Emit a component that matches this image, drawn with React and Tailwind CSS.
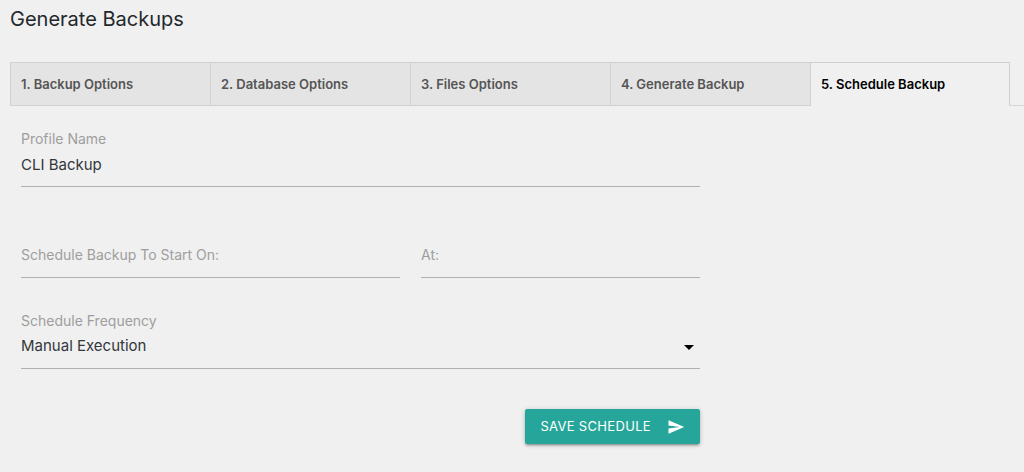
import { useState } from 'react';

const tabs = [
    { id: 'options', label: '1. Backup Options' },
    { id: 'database', label: '2. Database Options' },
    { id: 'files', label: '3. Files Options' },
    { id: 'generate', label: '4. Generate Backup' },
    { id: 'schedule', label: '5. Schedule Backup' },
];

const fieldClass = 'block w-full border-b border-[#b0b0b0] bg-transparent text-[15px] text-[#32373c] outline-none focus:border-[#26a69a]';
const labelClass = 'block text-[14px] leading-5 text-[#9e9e9e]';

// Label sits inside the empty field and hides once there is a value
const InlineField = ({ id, label, className }) => {
    const [value, setValue] = useState('');

    return (
        <div className={`relative ${className}`}>
            <input
                id={id}
                type="text"
                value={value}
                onChange={(e) => setValue(e.target.value)}
                className={`${fieldClass} h-12`}
            />
            <label
                htmlFor={id}
                className={`${labelClass} pointer-events-none absolute left-0 top-[15px] ${value ? 'opacity-0' : ''}`}
            >
                {label}
            </label>
        </div>
    );
};

const App = () => {
    const [active, setActive] = useState('schedule');

    return (
        <main className="min-h-screen bg-[#f0f0f0] pl-2.5 pt-1 font-['Inter',sans-serif]">
            <h1 className="text-[20px] leading-[30px] text-[#23282d]">Generate Backups</h1>

            {/* Tabs */}
            <nav className="mt-7 flex border-b border-[#d6d6d6]">
                {tabs.map((tab) => (
                    <a
                        key={tab.id}
                        href={`#${tab.id}`}
                        onClick={() => setActive(tab.id)}
                        className={`-mb-px min-w-0 max-w-[200px] flex-1 border-l border-t border-[#d0d0d0] px-2.5 py-3 text-[13px] font-semibold leading-[18px] last:border-r ${
                            active === tab.id
                                ? 'bg-[#f0f0f0] pb-[13px] text-black'
                                : 'border-b bg-[#e4e4e4] text-[#555555]'
                        }`}
                    >
                        {tab.label}
                    </a>
                ))}
            </nav>

            {/* Schedule form */}
            <form className="ml-[11px] mt-[23px] max-w-[679px]" onSubmit={(e) => e.preventDefault()}>
                <div>
                    <label htmlFor="profile" className={labelClass}>Profile Name</label>
                    <input id="profile" type="text" defaultValue="CLI Backup" className={`${fieldClass} h-[38px] pb-1.5`} />
                </div>

                <div className="mt-[43px] flex gap-[21px]">
                    <InlineField id="start" label="Schedule Backup To Start On:" className="w-[379px]" />
                    <InlineField id="at" label="At:" className="flex-1" />
                </div>

                <div className="mt-[33px]">
                    <label htmlFor="frequency" className={labelClass}>Schedule Frequency</label>
                    <div className="relative">
                        <select id="frequency" className={`${fieldClass} h-[38px] appearance-none pb-1.5`}>
                            <option>Manual Execution</option>
                            <option>Daily</option>
                            <option>Weekly</option>
                            <option>Monthly</option>
                        </select>
                        <svg viewBox="0 0 10 5" className="pointer-events-none absolute right-1.5 top-3.5 h-[5px] w-2.5 fill-black">
                            <path d="M0 0h10L5 5z" />
                        </svg>
                    </div>
                </div>

                <div className="mt-10 flex justify-end">
                    <button
                        type="submit"
                        className="flex h-[35px] items-center gap-4 rounded-xs bg-[#26a69a] px-[15px] text-[13px] uppercase tracking-wide text-white shadow-[0_2px_2px_0_rgba(0,0,0,0.14),0_3px_1px_-2px_rgba(0,0,0,0.12),0_1px_5px_0_rgba(0,0,0,0.2)]"
                    >
                        Save Schedule
                        <svg viewBox="0 0 24 24" className="h-[18px] w-[18px] fill-white">
                            <path d="M2.01 21L23 12 2.01 3 2 10l15 2-15 2z" />
                        </svg>
                    </button>
                </div>
            </form>
        </main>
    );
};

export default App;
